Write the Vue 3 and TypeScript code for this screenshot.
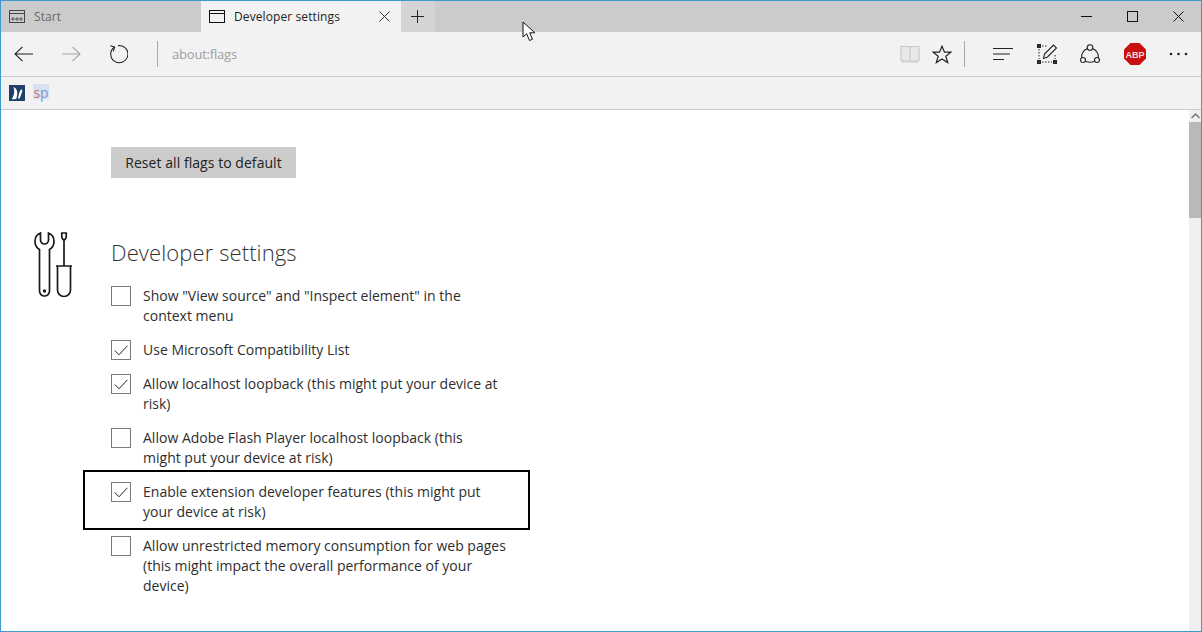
<script setup lang="ts">
interface Flag { label: string; checked: boolean; highlighted?: boolean }
const flags: Flag[] = [
  { label: 'Show "View source" and "Inspect element" in the context menu', checked: false },
  { label: 'Use Microsoft Compatibility List', checked: true },
  { label: 'Allow localhost loopback (this might put your device at risk)', checked: true },
  { label: 'Allow Adobe Flash Player localhost loopback (this\nmight put your device at risk)', checked: false },
  { label: 'Enable extension developer features (this might put your device at risk)', checked: true, highlighted: true },
  { label: 'Allow unrestricted memory consumption for web pages (this might impact the overall performance of your device)', checked: false },
]
</script>

<template>
  <div class="window">
    <header class="tabstrip">
      <div class="tab">
        <svg class="tab-icon" width="16" height="13" viewBox="0 0 16 13" fill="none" stroke="#444" stroke-width="1">
          <rect x="0.5" y="0.5" width="15" height="12" />
          <path d="M0.5 3.5h15" />
          <path d="M3 8h2v2H3zM7 8h2v2H7zM11 8h2v2h-2z" stroke-width="0.8" />
        </svg>
        <span class="tab-title muted">Start</span>
      </div>
      <div class="tab active">
        <svg class="tab-icon" width="16" height="13" viewBox="0 0 16 13" fill="none" stroke="#111" stroke-width="1">
          <rect x="0.5" y="0.5" width="15" height="12" />
          <path d="M0.5 3.5h15" />
        </svg>
        <span class="tab-title">Developer settings</span>
        <svg class="tab-close" width="11" height="11" viewBox="0 0 11 11" stroke="#333" stroke-width="1"><path d="M0.5 0.5l10 10M10.5 0.5l-10 10" /></svg>
      </div>
      <div class="new-tab">
        <svg width="13" height="13" viewBox="0 0 13 13" stroke="#222" stroke-width="1"><path d="M6.5 0v13M0 6.5h13" /></svg>
      </div>
      <div class="caption">
        <svg width="11" height="11" viewBox="0 0 11 11" stroke="#111" stroke-width="1"><path d="M0 5.5h11" /></svg>
        <svg width="11" height="11" viewBox="0 0 11 11" fill="none" stroke="#111" stroke-width="1"><rect x="0.5" y="0.5" width="10" height="10" /></svg>
        <svg width="11" height="11" viewBox="0 0 11 11" stroke="#111" stroke-width="1"><path d="M0.5 0.5l10 10M10.5 0.5l-10 10" /></svg>
      </div>
    </header>

    <nav class="toolbar">
      <svg class="nav-back" width="20" height="16" viewBox="0 0 20 16" fill="none" stroke="#222" stroke-width="1.1"><path d="M19 8H1M8.5 0.8L1 8l7.5 7.2" /></svg>
      <svg class="nav-forward" width="20" height="16" viewBox="0 0 20 16" fill="none" stroke="#a6a6a6" stroke-width="1.1"><path d="M1 8h18M11.5 0.8L19 8l-7.5 7.2" /></svg>
      <svg class="nav-refresh" width="20" height="20" viewBox="0 0 20 20" fill="none" stroke="#222" stroke-width="1.1"><path d="M6.2 3.2A8.6 8.6 0 1 0 10 1.6" /><path d="M2.3 1.7l4.4 1.4-1.5 4.3" /></svg>
      <span class="divider first"></span>
      <span class="address">about:flags</span>
      <div class="tools-left">
        <svg width="20" height="18" viewBox="0 0 20 18" fill="#e8e8e8" stroke="#c9c9c9" stroke-width="1.2"><path d="M1 1.5h8.2L10 3l.8-1.5H19V16H1z" /><path d="M10 3v13" /><path d="M3 15v2h14v-2" fill="none" /></svg>
        <svg width="20" height="19" viewBox="0 0 20 19" fill="none" stroke="#222" stroke-width="1.2"><path d="M10 1.2l2.5 6h6.3l-5 4 1.9 6.4L10 14l-5.700 3.600 1.900-6.400-5-4h6.300z" /></svg>
      </div>
      <span class="divider second"></span>
      <div class="tools-right">
        <svg width="20" height="14" viewBox="0 0 20 14" stroke="#222" stroke-width="1.200"><path d="M0 1.500h20M0 7h17M0 12.500h11" /></svg>
        <svg width="20" height="20" viewBox="0 0 20 20" fill="none" stroke="#222">
          <rect x="0.500" y="0.500" width="3" height="3" fill="#333" />
          <rect x="0.500" y="16.500" width="3" height="3" fill="#333" />
          <rect x="16.500" y="16.500" width="3" height="3" fill="#333" />
          <path d="M5 2h5M2 5v10M5 18h10M18 11v4" stroke-dasharray="1.500 1.500" />
          <path d="M6.500 14.500l1-4.500L16.500 1l3 3-9 9z" stroke-width="1.100" />
        </svg>
        <svg width="20" height="20" viewBox="0 0 20 20" fill="none" stroke="#222" stroke-width="1.100">
          <circle cx="10" cy="3.500" r="2.800" />
          <circle cx="3" cy="16" r="2.500" />
          <circle cx="17" cy="16" r="2.500" />
          <path d="M7.500 4.500C3.500 6 1.200 10 1.700 13.800M12.500 4.500c4 1.500 6.300 5.500 5.800 9.300M5.300 17.200c2.800 1.300 6.600 1.300 9.400 0" />
        </svg>
        <svg width="22" height="22" viewBox="0 0 22 22">
          <path d="M6.500 0h9L22 6.500v9L15.500 22h-9L0 15.500v-9z" fill="#c8100f" />
          <text x="11" y="14.500" class="abp-text">ABP</text>
        </svg>
        <svg width="19" height="4" viewBox="0 0 19 4" fill="#222"><circle cx="2" cy="2" r="1.300" /><circle cx="9.500" cy="2" r="1.300" /><circle cx="17" cy="2" r="1.300" /></svg>
      </div>
    </nav>

    <div class="favorites">
      <svg width="16" height="16" viewBox="0 0 16 16"><rect width="16" height="16" fill="#1e3f66" /><path d="M4.500 2C7 3 8.500 5.500 8.300 8.500L7.500 13.500C6 14.500 4 14.500 2.700 14.200 5 11 6 6.500 4.500 2zM12.200 4l1.300 2-2.800 7.500H9C9.300 10.500 10.200 7 12.200 4z" fill="#fff" /></svg>
      <div class="sp-icon"><span class="s">s</span><span class="p">p</span></div>
    </div>

    <div class="page">
      <main class="content">
        <button class="reset">Reset all flags to default</button>
        <section class="section">
          <svg class="section-icon" width="40" height="66" viewBox="0 0 40 66" fill="none" stroke="#1a1a1a" stroke-width="1.700">
            <path d="M6.500 1C2.500 2.500 1 6 1 9.500 1 13.500 3 16 5.500 17.500V59a5 5 0 0 0 10 0V17.500C18 16 20 13.500 20 9.500 20 6 18.500 2.500 14.500 1V8a4 4 0 0 1-8 0z" />
            <circle cx="10.500" cy="59" r="0.800" fill="#1a1a1a" />
            <path d="M27.800 1h4.400v4l-1 2.500h-2.400l-1-2.500zM30 7.500V34" />
            <path d="M22 34h16M23.500 34v24a6.500 6.500 0 0 0 13 0V34" />
          </svg>
          <div class="section-body">
            <h1 class="heading">Developer settings</h1>
            <ul class="flags">
              <li v-for="flag in flags" :key="flag.label" class="flag">
                <span class="box">
                  <svg v-if="flag.checked" width="14" height="11" viewBox="0 0 14 11" fill="none" stroke="#222" stroke-width="1"><path d="M0.800 5.500L5 9.800 13.400 0.800" /></svg>
                </span>
                <span class="flag-label">{{ flag.label }}</span>
                <span v-if="flag.highlighted" class="highlight"></span>
              </li>
            </ul>
          </div>
        </section>
      </main>
      <aside class="scrollbar">
        <div class="scroll-arrow">
          <svg width="9" height="6" viewBox="0 0 9 6" fill="none" stroke="#777" stroke-width="1.500"><path d="M0.500 5L4.500 1l4 4" /></svg>
        </div>
        <div class="scroll-thumb"></div>
      </aside>
    </div>

    <svg class="cursor" width="14" height="21" viewBox="0 0 14 21" fill="#fff" stroke="#111" stroke-width="1"><path d="M1 1v15l3.600-3.300L7.500 19.500l3-1.300-2.900-6.400H12.800z" /></svg>
  </div>
</template>

<style>
html, body { margin: 0; padding: 0; background: #fff; }
</style>

<style scoped>
.window {
  position: relative;
  box-sizing: border-box;
  width: 1202px;
  height: 632px;
  border: 1px solid #3d9ad1;
  display: flex;
  flex-direction: column;
  overflow: hidden;
  font-family: "Open Sans", "Noto Sans", sans-serif;
  color: #333;
  background: #fff;
}
.tabstrip {
  height: 31px;
  flex: none;
  display: flex;
  align-items: stretch;
  background: #cccbcb;
}
.tab {
  width: 200px;
  display: flex;
  align-items: center;
  padding-left: 8px;
  box-sizing: border-box;
  font-size: 12px;
}
.tab.active {
  background: #f2f2f2;
  color: #222;
}
.tab-icon { flex: none; margin-right: 9px; }
.tab-title { flex: 1; letter-spacing: 0.1px; }
.muted { color: #6a6a6a; }
.tab-close { margin-right: 11px; }
.new-tab {
  width: 34px;
  padding-right: 2px;
  box-sizing: border-box;
  background: #d4d4d4;
  display: flex;
  align-items: center;
  justify-content: center;
}
.caption {
  margin-left: auto;
  display: flex;
  align-items: center;
  gap: 35px;
  padding-right: 17px;
}
.toolbar {
  height: 44px;
  flex: none;
  display: flex;
  align-items: center;
  background: #f2f2f2;
  border-bottom: 1px solid #ccc;
  padding-left: 13px;
}
.nav-forward { margin-left: 27px; }
.nav-refresh { margin-left: 27px; }
.divider { width: 1px; height: 26px; background: #a9a9a9; flex: none; }
.divider.first { margin-left: 29px; }
.divider.second { margin-left: 12px; }
.address { margin-left: 14px; font-size: 13px; color: #a0a0a0; letter-spacing: -0.2px; }
.tools-left {
  margin-left: auto;
  display: flex;
  align-items: center;
  gap: 12px;
}
.tools-right {
  margin-left: 28px;
  width: 195px;
  padding-right: 13px;
  display: flex;
  align-items: center;
  justify-content: space-between;
}
.abp-text {
  font-family: "Liberation Sans", sans-serif;
  font-size: 9px;
  font-weight: 700;
  fill: #f4dcdc;
  text-anchor: middle;
}
.favorites {
  height: 33px;
  flex: none;
  box-sizing: border-box;
  display: flex;
  align-items: center;
  gap: 8px;
  padding-left: 8px;
  background: #f2f2f2;
  border-bottom: 1px solid #ccc;
}
.sp-icon {
  width: 16px;
  height: 18px;
  margin-bottom: 1px;
  background: linear-gradient(#d6e1f5 70%, #f4f6fb);
  display: flex;
  align-items: center;
  justify-content: center;
  font-size: 14px;
  line-height: 18px;
}
.sp-icon .s { color: #c8716b; }
.sp-icon .p { color: #7a97cf; }
.page {
  flex: 1;
  min-height: 0;
  display: flex;
}
.content {
  flex: 1;
  min-width: 0;
  padding: 37px 0 0 33px;
  box-sizing: border-box;
}
.reset {
  display: block;
  margin: 0 0 0 77px;
  width: 185px;
  height: 31px;
  border: none;
  padding: 0;
  background: #cccccc;
  color: #222;
  font: inherit;
  font-size: 14px;
  letter-spacing: 0.05px;
}
.section {
  display: flex;
  margin-top: 54px;
}
.section-icon { flex: none; margin-right: 37px; }
.section-body { width: 400px; }
.heading {
  margin: 4px 0 18px;
  font-size: 22px;
  line-height: 32px;
  font-weight: 300;
  color: #333;
  letter-spacing: 0.1px;
  white-space: nowrap;
}
.flags {
  list-style: none;
  margin: 0;
  padding: 0;
  display: flex;
  flex-direction: column;
  gap: 14px;
}
.flag {
  position: relative;
  display: flex;
  align-items: flex-start;
  gap: 12px;
}
.box {
  flex: none;
  box-sizing: border-box;
  width: 20px;
  height: 20px;
  border: 1px solid #7a7a7a;
  background: #fff;
  display: flex;
  align-items: center;
  justify-content: center;
}
.flag-label {
  flex: none;
  width: 364px;
  font-size: 14px;
  line-height: 20px;
  letter-spacing: 0.01px;
  color: #2e2e2e;
  white-space: pre-line;
}
.highlight {
  position: absolute;
  left: -28px;
  top: -12px;
  width: 447px;
  height: 60px;
  box-sizing: border-box;
  border: 2px solid #000;
  pointer-events: none;
}
.scrollbar {
  width: 12px;
  flex: none;
  background: #f0f0f0;
  display: flex;
  flex-direction: column;
}
.scroll-arrow {
  height: 12px;
  display: flex;
  align-items: center;
  justify-content: center;
}
.scroll-thumb {
  height: 96px;
  background: #b9b9b9;
}
.cursor {
  position: absolute;
  left: 521px;
  top: 20px;
}
</style>
